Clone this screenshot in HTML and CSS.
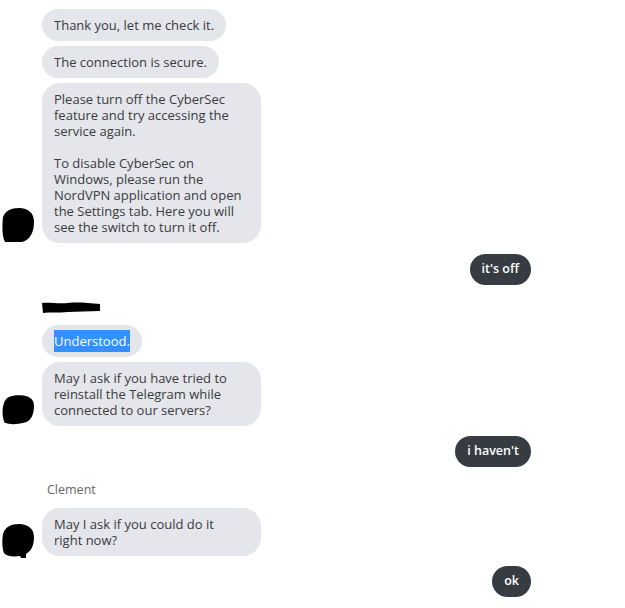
FILE: index.html
```html
<!DOCTYPE html>
<html>
<head>
<meta charset="utf-8">
<link rel="stylesheet" href="styles.css">
</head>
<body>
<div class="chat">
  <div class="row in mt9"><div class="avatar"></div><div class="bubble">Thank you, let me check it.</div></div>
  <div class="row in mt5"><div class="avatar"></div><div class="bubble">The connection is secure.</div></div>
  <div class="row in mt5">
    <div class="avatar"><svg class="blob b1" width="32" height="34" viewBox="0 0 32 34"><path d="M1 9 C3 3 9 0 17 0 C26 0 32 5 32 14 C32 24 28 32 20 34 L3 34 C0 29 0 18 1 9 Z"/></svg></div>
    <div class="bubble wide">Please turn off the CyberSec<br>feature and try accessing the<br>service again.<br><br>To disable CyberSec on<br>Windows, please run the<br>NordVPN application and open<br>the Settings tab. Here you will<br>see the switch to turn it off.</div>
  </div>
  <div class="row out mt11"><div class="bubble dark">it's off</div></div>
  <div class="row in mt17"><div class="avatar"></div><svg class="scribble" width="58" height="11" viewBox="0 0 58 11"><path d="M0 1 C8 0 16 2 26 1 C36 0 46 1 58 2 L58 9 C46 9 36 10 26 10 C16 11 8 10 1 11 Z"/></svg></div>
  <div class="row in mt12"><div class="avatar"></div><div class="bubble"><span class="sel">Understood.</span></div></div>
  <div class="row in mt5">
    <div class="avatar"><svg class="blob" width="35" height="33" viewBox="0 0 35 33"><path d="M2 10 C4 3 10 1 18 1 C27 0 35 4 35 12 C35 22 32 29 24 31 C16 33 8 33 3 31 C0 25 0 16 2 10 Z"/></svg></div>
    <div class="bubble wide">May I ask if you have tried to<br>reinstall the Telegram while<br>connected to our servers?</div>
  </div>
  <div class="row out mt10"><div class="bubble dark">i haven't</div></div>
  <div class="name">Clement</div>
  <div class="row in mt10">
    <div class="avatar"><svg class="blob b3" width="32" height="34" viewBox="0 0 32 34"><path d="M1 10 C3 3 9 0 17 0 C26 0 32 5 32 13 C32 22 29 27 24 30 L24 34 L19 34 L18 32 C10 33 4 32 2 29 C0 24 0 16 1 10 Z"/></svg></div>
    <div class="bubble wide">May I ask if you could do it<br>right now?</div>
  </div>
  <div class="row out mt10"><div class="bubble dark">ok</div></div>
</div>
</body>
</html>
```

FILE: styles.css
```css
html, body {
  margin: 0;
  padding: 0;
  background: #ffffff;
}

body {
  width: 625px;
  height: 608px;
  overflow: hidden;
  font-family: "Open Sans", "Noto Sans", "Liberation Sans", sans-serif;
  font-size: 13px;
  line-height: 16px;
  color: #3a3b3d;
}

.chat {
  display: flex;
  flex-direction: column;
  width: 531px;
}

.row {
  display: flex;
  align-items: flex-end;
}

.row.in {
  padding-left: 2px;
  gap: 8px;
}

.row.out {
  justify-content: flex-end;
}

.avatar {
  width: 32px;
  flex: none;
  display: flex;
  align-items: flex-end;
}

.blob {
  display: block;
  fill: #000;
}

.b1 { margin-bottom: 1px; }
.b3 { margin-bottom: -2px; }

.scribble {
  display: block;
  fill: #000;
}

.bubble {
  background: #e4e6eb;
  border-radius: 16px;
  padding: 8px 12px;
  white-space: nowrap;
  color: #3a3b3d;
}

.bubble.wide {
  width: 219px;
  box-sizing: border-box;
  border-radius: 18px;
}

.bubble.dark {
  background: #373c43;
  color: #ffffff;
  font-weight: 600;
  font-size: 12.5px;
  padding: 7px 12px 8px;
}

.sel {
  background: #3390ff;
  color: #ffffff;
  padding: 2px 0;
}

.name {
  margin-top: 15px;
  padding-left: 47px;
  font-size: 12.5px;
  color: #65676b;
}

.mt5 { margin-top: 5px; }
.mt9 { margin-top: 9px; }
.mt10 { margin-top: 10px; }
.mt11 { margin-top: 11px; }
.mt12 { margin-top: 12px; }
.mt17 { margin-top: 17px; }
```
